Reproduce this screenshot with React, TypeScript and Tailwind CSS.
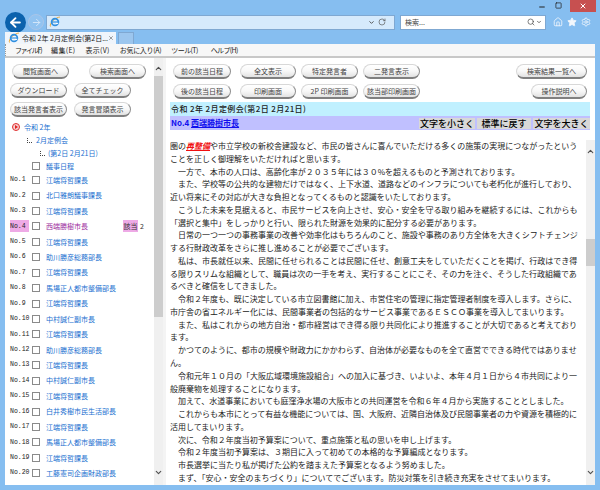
import { ChevronDown, ChevronUp, Home, Minus, RotateCw, Search, Settings, Square, Star, X, ArrowLeft, ArrowRight } from "lucide-react";

const FONT = "[font-family:'Noto_Sans_CJK_JP','Noto_Sans_JP',sans-serif]";

const SPEAKERS = [
  { no: "No.1", name: "江端将哲課長" },
  { no: "No.2", name: "北口雅朗議事課長" },
  { no: "No.3", name: "江端将哲課長" },
  { no: "No.4", name: "西端勝樹市長", current: true },
  { no: "No.5", name: "江端将哲課長" },
  { no: "No.6", name: "助川勝彦総務部長" },
  { no: "No.7", name: "江端将哲課長" },
  { no: "No.8", name: "馬場正人都市整備部長" },
  { no: "No.9", name: "江端将哲課長" },
  { no: "No.10", name: "中村誠仁副市長" },
  { no: "No.11", name: "江端将哲課長" },
  { no: "No.12", name: "助川勝彦総務部長" },
  { no: "No.13", name: "江端将哲課長" },
  { no: "No.14", name: "中村誠仁副市長" },
  { no: "No.15", name: "江端将哲課長" },
  { no: "No.16", name: "白井秀樹市民生活部長" },
  { no: "No.17", name: "江端将哲課長" },
  { no: "No.18", name: "馬場正人都市整備部長" },
  { no: "No.19", name: "江端将哲課長" },
  { no: "No.20", name: "工藤憲司企画財政部長" },
];

const LINES = [
  "ことを正しく御理解をいただければと思います。",
  "　一方で、本市の人口は、高齢化率が２０３５年には３０%を超えるものと予測されております。",
  "　また、学校等の公共的な建物だけではなく、上下水道、道路などのインフラについても老朽化が進行しており、",
  "近い将来にその対応が大きな負担となってくるものと認識をいたしております。",
  "　こうした未来を見据えると、市民サービスを向上させ、安心・安全を守る取り組みを継続するには、これからも",
  "「選択と集中」をしっかりと行い、限られた財源を効果的に配分する必要があります。",
  "　日常の一つ一つの事務事業の改善や効率化はもちろんのこと、施設や事務のあり方全体を大きくシフトチェンジ",
  "する行財政改革をさらに推し進めることが必要でございます。",
  "　私は、市長就任以来、民間に任せられることは民間に任せ、創意工夫をしていただくことを掲げ、行政はでき得",
  "る限りスリムな組織として、職員は次の一手を考え、実行することにこそ、その力を注ぐ、そうした行政組織であ",
  "るべきと確信をしてきました。",
  "　令和２年度も、既に決定している市立図書館に加え、市営住宅の管理に指定管理者制度を導入します。さらに、",
  "市庁舎の省エネルギー化には、民間事業者の包括的なサービス事業であるＥＳＣＯ事業を導入してまいります。",
  "　また、私はこれからの地方自治・都市経営はでき得る限り共同化により推進することが大切であると考えており",
  "ます。",
  "　かつてのように、都市の規模や財政力にかかわらず、自治体が必要なものを全て直営でできる時代ではありませ",
  "ん。",
  "　令和元年１０月の「大阪広域環境施設組合」への加入に基づき、いよいよ、本年４月１日から４市共同により一",
  "般廃棄物を処理することになります。",
  "　加えて、水道事業においても庭窪浄水場の大阪市との共同運営を令和６年４月から実施することとしました。",
  "　これからも本市にとって有益な機能については、国、大阪府、近隣自治体及び民間事業者の力や資源を積極的に",
  "活用してまいります。",
  "　次に、令和２年度当初予算案について、重点施策と私の思いを申し上げます。",
  "　令和２年度当初予算案は、３期目に入って初めての本格的な予算編成となります。",
  "　市長選挙に当たり私が掲げた公約を踏まえた予算案となるよう努めました。",
  "　まず、「安心・安全のまちづくり」についてでございます。防災対策を引き続き充実をさせてまいります。",
];

function IeLogo() {
  return (
    <svg width="12" height="12" viewBox="0 0 12 12" className="shrink-0">
      <path d="M1.5 10.5C.5 9 3 4.5 6 3s4.5-2.5 5-1.5" fill="none" stroke="#f0a830" strokeWidth="1" />
      <circle cx="6" cy="6" r="3.4" fill="none" stroke="#2f8fe0" strokeWidth="1.7" />
      <path d="M3 6h6" stroke="#2f8fe0" strokeWidth="1.1" />
      <path d="M9 7.5h-2l2.4-.2" stroke="#ffffff" strokeWidth="0.8" />
    </svg>
  );
}

function Pill({ label, className }: { label: string; className: string }) {
  return (
    <button
      className={`h-[15px] shrink-0 rounded-[8px] border border-[#d8d8d8] border-r-[#909090] border-b-2 border-b-[#808080] bg-gradient-to-b from-white via-[#f8f8f8] to-[#e2e2e2] text-[7px] leading-none whitespace-nowrap text-[#444] ${className}`}
    >
      {label}
    </button>
  );
}

function ScrollTrack({ top, thumb, className }: { top: string; thumb: string; className: string }) {
  return (
    <div className={`flex flex-col items-center bg-[#f0f0f0] text-[#505050] ${className}`}>
      <ChevronUp size={9} strokeWidth={3} className="shrink-0" />
      <div className={`w-full shrink-0 ${top}`} />
      <div className={`w-full shrink-0 bg-[#cdcdcd] ${thumb}`} />
      <div className="flex-1" />
      <ChevronDown size={9} strokeWidth={3} className="mb-[8px] shrink-0" />
    </div>
  );
}

function SpeakerRow({ no, name, current }: { no: string; name: string; current?: boolean }) {
  return (
    <div className="flex h-[15.43px] items-center">
      <span
        className={`ml-[5px] flex h-[12px] w-[19px] items-center font-['Liberation_Mono'] text-[6.5px] font-normal text-[#222] ${current ? "bg-[#eeaae6]" : ""}`}
      >
        {no}
      </span>
      <span className="ml-[3px] h-[8px] w-[8px] border border-[#8a8a8a] bg-white" />
      <span className={`ml-[6px] w-[77px] text-[7px] whitespace-nowrap ${current ? "text-[#a030a0]" : "text-[#1a70d0]"}`}>{name}</span>
      {current && (
        <>
          <span className="flex h-[12px] w-[15px] items-center justify-center bg-[#eeaae6] text-[7px] text-[#333]">該当</span>
          <span className="ml-[2px] text-[7px] text-[#333]">2</span>
        </>
      )}
    </div>
  );
}

function SizeButton({ label, className }: { label: string; className: string }) {
  return (
    <button className={`h-[11px] bg-[#d8d8d8] text-[9px] leading-none font-medium whitespace-nowrap text-black ${className}`}>
      {label}
    </button>
  );
}

export default function App() {
  return (
    <div className={`flex h-[490px] w-[600px] flex-col overflow-hidden bg-[#86bef0] ${FONT}`}>
      {/* title bar */}
      <div className="flex h-[12px] shrink-0 items-start justify-end pr-[4px] text-[#222]">
        <Minus size={8} strokeWidth={3} className="mt-[3px]" />
        <Square size={7} strokeWidth={2.5} className="mt-[2px] ml-[9px]" />
        <div className="ml-[8px] flex h-[12px] w-[26px] items-center justify-center bg-[#c75050] text-white">
          <X size={8} strokeWidth={3} />
        </div>
      </div>

      {/* address row */}
      <div className="flex h-[20px] shrink-0 items-center pl-[5px]">
        <div className="flex h-[21px] w-[21px] shrink-0 items-center justify-center rounded-full bg-[#0b62ad] text-white">
          <ArrowLeft size={15} strokeWidth={3} />
        </div>
        <div className="ml-[2px] flex h-[16px] w-[16px] shrink-0 items-center justify-center rounded-full border border-[#a9c5e8] bg-[#92c3f0] text-[#d6e8fa]">
          <ArrowRight size={11} strokeWidth={2} />
        </div>
        <div className="ml-[2px] flex h-[15px] w-[349px] shrink-0 items-center border border-[#7fa8d2] bg-[#d6eafc] pr-[8px] pl-[2px]">
          <IeLogo />
          <div className="flex-1" />
          <ChevronDown size={7} strokeWidth={3} className="text-[#444]" />
          <RotateCw size={8} strokeWidth={2} className="ml-[3px] text-[#555]" />
        </div>
        <div className="ml-[5px] flex h-[15px] w-[146px] shrink-0 items-center border border-[#7fa8d2] bg-white pr-[3px] pl-[4px] text-[7px] text-[#444]">
          <span className="flex-1">検索...</span>
          <Search size={8} strokeWidth={2} />
          <ChevronDown size={6} strokeWidth={3} className="ml-[1px]" />
        </div>
        <Home size={10} strokeWidth={2} className="ml-[7px] text-[#f2f7fc]" />
        <Star size={10} fill="currentColor" className="ml-[4px] text-[#f2f7fc]" />
        <Settings size={10} strokeWidth={2} className="ml-[4px] text-[#f2f7fc]" />
      </div>

      {/* tabs */}
      <div className="flex h-[12px] shrink-0 items-end pl-[5px]">
        <div className="flex h-[12px] w-[111px] items-center bg-[#f0f5fb] pr-[2px] pl-[3px] text-[7px] whitespace-nowrap text-[#222]">
          <IeLogo />
          <span className="ml-[2px] flex-1">令和 2年 2月定例会(第2日...</span>
          <X size={6} strokeWidth={2.5} className="text-[#666]" />
        </div>
        <div className="ml-[2px] h-[12px] w-[16px] border border-b-0 border-[#7fa8d2] bg-[#9cc6ee]" />
      </div>

      {/* menu bar */}
      <div className="ml-[5px] flex h-[12px] w-[590px] shrink-0 items-center gap-[10px] border-l border-dotted border-[#999] bg-[#f7f7f7] pl-[9px] text-[7px] text-[#222]">
        <span className="tracking-[-1.5px]">ファイル(F)</span>
        <span className="tracking-[0.3px]">編集(E)</span>
        <span className="tracking-[0.3px]">表示(V)</span>
        <span className="tracking-[-0.3px]">お気に入り(A)</span>
        <span className="tracking-[-0.6px]">ツール(T)</span>
        <span className="ml-[3px] tracking-[-0.6px]">ヘルプ(H)</span>
      </div>

      {/* page */}
      <div className="ml-[5px] flex h-[429px] w-[590px] shrink-0 overflow-hidden border-t-2 border-[#c8c8c8] bg-white">
        {/* left frame */}
        <div className="w-[149px] shrink-0">
          <div className="flex pt-[6px] pl-[7px]">
            <Pill label="閲覧画面へ" className="w-[57px]" />
            <Pill label="検索画面へ" className="ml-[20px] w-[57px]" />
          </div>
          <div className="flex pt-[4px] pl-[5px]">
            <Pill label="ダウンロード" className="w-[57px]" />
            <Pill label="全てチェック" className="ml-[7px] w-[57px]" />
          </div>
          <div className="flex pt-[4px] pl-[5px]">
            <Pill label="該当発言者表示" className="w-[57px]" />
            <Pill label="発言冒頭表示" className="ml-[7px] w-[57px]" />
          </div>
          <div className="mt-[3.5px] flex h-[13px] items-center pl-[7px] text-[7px] text-[#1a70d0]">
            <span className="flex h-[8px] w-[8px] items-center justify-center rounded-full border border-[#e03030] bg-[#f8d0d0]">
              <span className="h-0 w-0 border-y-[2px] border-l-[3px] border-y-transparent border-l-[#e02020]" />
            </span>
            <span className="ml-[4px]">令和 2年</span>
          </div>
          <div className="flex h-[13px] items-center pl-[22px] text-[7px] text-[#1a70d0]">
            <span className="h-[5px] w-[5px] border-b border-l border-dotted border-[#444]" />
            <span className="ml-[4px]">2月定例会</span>
          </div>
          <div className="flex h-[13px] items-center pl-[35px] text-[7px] text-[#1a70d0]">
            <span className="h-[5px] w-[5px] border-b border-l border-dotted border-[#444]" />
            <span className="ml-[3px]">(第2日 2月21日)</span>
          </div>
          <div className="flex h-[13px] items-center pl-[27px]">
            <span className="h-[8px] w-[8px] border border-[#8a8a8a] bg-white" />
            <span className="ml-[6px] text-[7px] text-[#1a70d0]">議事日程</span>
          </div>
          {SPEAKERS.map((s) => (
            <SpeakerRow key={s.no} {...s} />
          ))}
        </div>
        <ScrollTrack top="h-[3px]" thumb="h-[241px]" className="w-[9px] shrink-0 pt-[6px]" />
        <div className="w-[3px] shrink-0 bg-[#f4f4f4]" />

        {/* right frame */}
        <div className="min-w-0 flex-1">
          <div className="flex pt-[6px] pl-[7px]">
            <Pill label="前の該当日程" className="w-[58px]" />
            <Pill label="全文表示" className="ml-[9px] w-[56px]" />
            <Pill label="特定発言者" className="ml-[5px] w-[57px]" />
            <Pill label="二発言表示" className="ml-[5px] w-[57px]" />
            <Pill label="検索結果一覧へ" className="ml-[96px] w-[71px]" />
          </div>
          <div className="flex pt-[5px] pl-[7px]">
            <Pill label="後の該当日程" className="w-[58px]" />
            <Pill label="印刷画面" className="ml-[9px] w-[56px]" />
            <Pill label="2P 印刷画面" className="ml-[5px] w-[57px]" />
            <Pill label="該当部印刷画面" className="ml-[5px] w-[57px]" />
            <Pill label="操作説明へ" className="ml-[111px] w-[56px]" />
          </div>
          <div className="mt-[3px] ml-[4px] flex h-[14px] w-[420px] items-center bg-[#c0f0ff] pl-[1px] text-[8px] font-medium tracking-[0.4px] text-[#222]">
            令和 2年 2月定例会(第2日 2月21日)
          </div>
          <div className="ml-[4px] flex h-[14px] w-[420px] items-center bg-[#c0c0ff] text-[8px] font-bold text-[#1010ee]">
            <span className="flex-1 pl-[1px]">
              No.4 <span className="underline">西端勝樹市長</span>
            </span>
            <SizeButton label="文字を小さく" className="w-[56px]" />
            <SizeButton label="標準に戻す" className="ml-[2px] w-[54px]" />
            <SizeButton label="文字を大きく" className="ml-[2px] w-[57px]" />
          </div>
          <div className="flex h-[355px] pt-[10px]">
            <div className="w-[420px] shrink-0 pl-[4px] text-[8px] leading-[12.77px] whitespace-nowrap text-[#222]">
              <div>
                圏の
                <span className="font-bold text-[#f01010] italic underline">再整備</span>
                や市立学校の新校舎建設など、市民の皆さんに喜んでいただける多くの施策の実現につながったという
              </div>
              {LINES.map((line, i) => (
                <div key={i}>{line}</div>
              ))}
            </div>
            <ScrollTrack top="h-[83px]" thumb="h-[27px]" className="w-[9px] shrink-0 pt-[7px]" />
          </div>
        </div>
      </div>
    </div>
  );
}
